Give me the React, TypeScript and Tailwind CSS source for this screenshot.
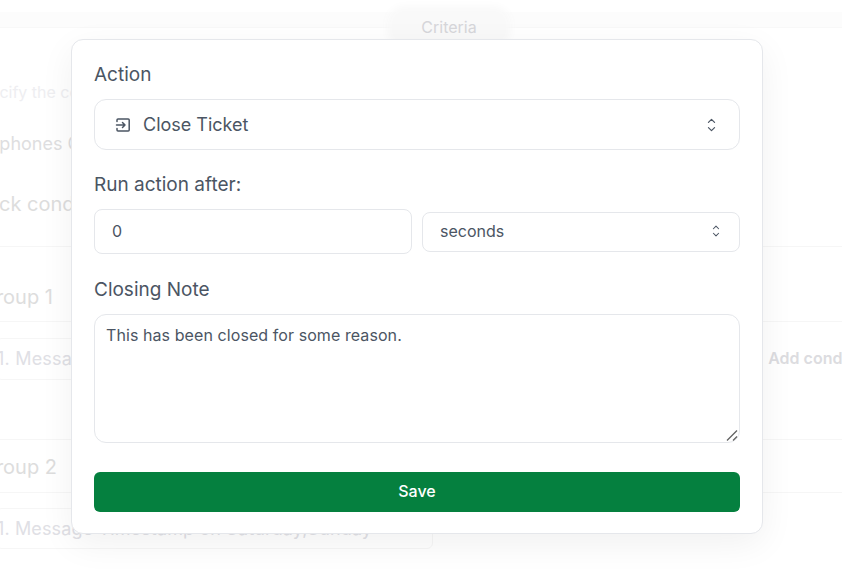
import React from "react";

function UpDown({ className }: { className: string }) {
  return (
    <svg className={className} viewBox="0 0 10 16" fill="none" stroke="#4b5563" strokeWidth="1.4" strokeLinecap="round" strokeLinejoin="round">
      <path d="M1.5 5 5 1.5 8.5 5" />
      <path d="M1.5 11 5 14.5 8.5 11" />
    </svg>
  );
}

function CloseIcon() {
  return (
    <svg className="w-[16px] h-[16px] shrink-0" viewBox="0 0 16 16" fill="none" stroke="#4b5563" strokeWidth="1.5" strokeLinecap="round" strokeLinejoin="round">
      <path d="M2 4.5V3a1 1 0 0 1 1-1h10.2a1 1 0 0 1 1 1v10a1 1 0 0 1-1 1H3a1 1 0 0 1-1-1v-1.5" />
      <path d="M1.5 8h8.5M7.5 5.5 10 8l-2.5 2.5" />
    </svg>
  );
}

function ResizeHandle() {
  return (
    <svg className="absolute right-[2px] bottom-[2px] w-[12px] h-[12px]" viewBox="0 0 12 12" fill="none" stroke="#5f5f5f" strokeWidth="1.2">
      <path d="M1 11.5 11 1.5" />
      <path d="M7 11.5 11 7.5" />
    </svg>
  );
}

function Background() {
  return (
    <div className="flex flex-col text-[#e3e3e7]">
      <div className="h-[28px] pt-[12px] border-b border-[#f8f8f8]">
        <div className="h-[15px] bg-[#fcfcfc] flex justify-center">
          <div className="w-[112px] h-[30px] ml-[56px] rounded-xl bg-[#f9f9f9] shadow-[0_0_8px_6px_#f9f9f9] flex items-center justify-center text-[16px] text-[#d6d6da] shrink-0">
            Criteria
          </div>
        </div>
      </div>
      <div className="h-[219px] border-b border-[#f6f6f6]">
        <p className="-ml-[30px] mt-[52px] text-[16px] leading-6 text-[#eeeef1]">Specify the conditions</p>
        <p className="-ml-[51px] mt-[26px] text-[18px] leading-7 text-[#dedee0]">Smartphones Criteria</p>
        <p className="-ml-[33px] mt-[32px] text-[20px] leading-7 text-[#dddddd]">Quick conditions</p>
      </div>
      <div className="h-[75px] border-b border-[#f6f6f6] -ml-[19px] pt-[36px] text-[20px] leading-7 text-[#dddddd]">Group 1</div>
      <div className="h-[118px] border-b border-[#f6f6f6] pt-[16px]">
        <div className="flex items-center -mr-[34px]">
          <div className="h-[42px] w-[500px] -ml-[4px] pb-[2px] flex items-center text-[18px] tracking-[0.2px] border border-[#f6f6f6] rounded-md text-[#e0e0e5]">
            1. Message
          </div>
          <span className="ml-auto pb-[2px] font-semibold text-[16px] text-[#dcdce0]">Add condition</span>
        </div>
      </div>
      <div className="h-[53px] -ml-[19px] pt-[13px] text-[20px] leading-7 text-[#dddddd] border-b border-[#f6f6f6]">Group 2</div>
      <div className="pt-[15px]">
        <div className="h-[41px] w-[437px] -ml-[4px] flex items-center text-[18px] tracking-[0.13px] whitespace-nowrap text-[#e0e0e5] border border-[#f6f6f6] rounded-md">
          1. Message Timestamp on Saturday,Sunday
        </div>
      </div>
    </div>
  );
}

export default function App() {
  return (
    <div className="relative w-[842px] h-[572px] overflow-hidden bg-white font-['Inter',sans-serif]">
      <Background />
      <div className="absolute left-[71px] top-[39px] w-[692px] h-[495px] flex flex-col bg-white border border-[#e5e7eb] rounded-xl px-[22px] pt-[21px] shadow-[0_10px_35px_rgba(0,0,0,0.06)] text-[#4b5563]">
        <label className="text-[19px] leading-7 mb-[10px]">Action</label>
        <div className="h-[51px] flex items-center border border-[#e5e7eb] rounded-xl pl-[20px] pr-[23px]">
          <CloseIcon />
          <span className="ml-[12px] text-[18px]">Close Ticket</span>
          <UpDown className="ml-auto w-[9px] h-[14px]" />
        </div>
        <label className="text-[19px] leading-7 mt-[21px] mb-[10px]">Run action after:</label>
        <div className="flex items-center gap-[10px] h-[45px]">
          <input readOnly value="0" className="w-[318px] h-[45px] border border-[#e5e7eb] rounded-lg pl-[17px] pr-[17px] pb-[2px] text-[16px] outline-none text-[#4b5563]" />
          <div className="w-[318px] h-[40px] flex items-center border border-[#e5e7eb] rounded-lg pl-[17px] pr-[19px] pb-[1px] text-[16px]">
            seconds
            <UpDown className="ml-auto w-[8px] h-[12px]" />
          </div>
        </div>
        <label className="text-[19px] leading-7 mt-[22px] mb-[10px]">Closing Note</label>
        <div className="relative h-[129px]">
          <textarea
            readOnly
            value="This has been closed for some reason."
            className="w-full h-full resize-none border border-[#e5e7eb] rounded-xl px-[11px] py-[8px] text-[16px] leading-6 tracking-[0.08px] outline-none text-[#4b5563]"
          />
          <ResizeHandle />
        </div>
        <button className="mt-[29px] h-[40px] w-full pb-[2px] rounded-md bg-[#05803f] text-white text-[16px] font-medium">Save</button>
      </div>
    </div>
  );
}
